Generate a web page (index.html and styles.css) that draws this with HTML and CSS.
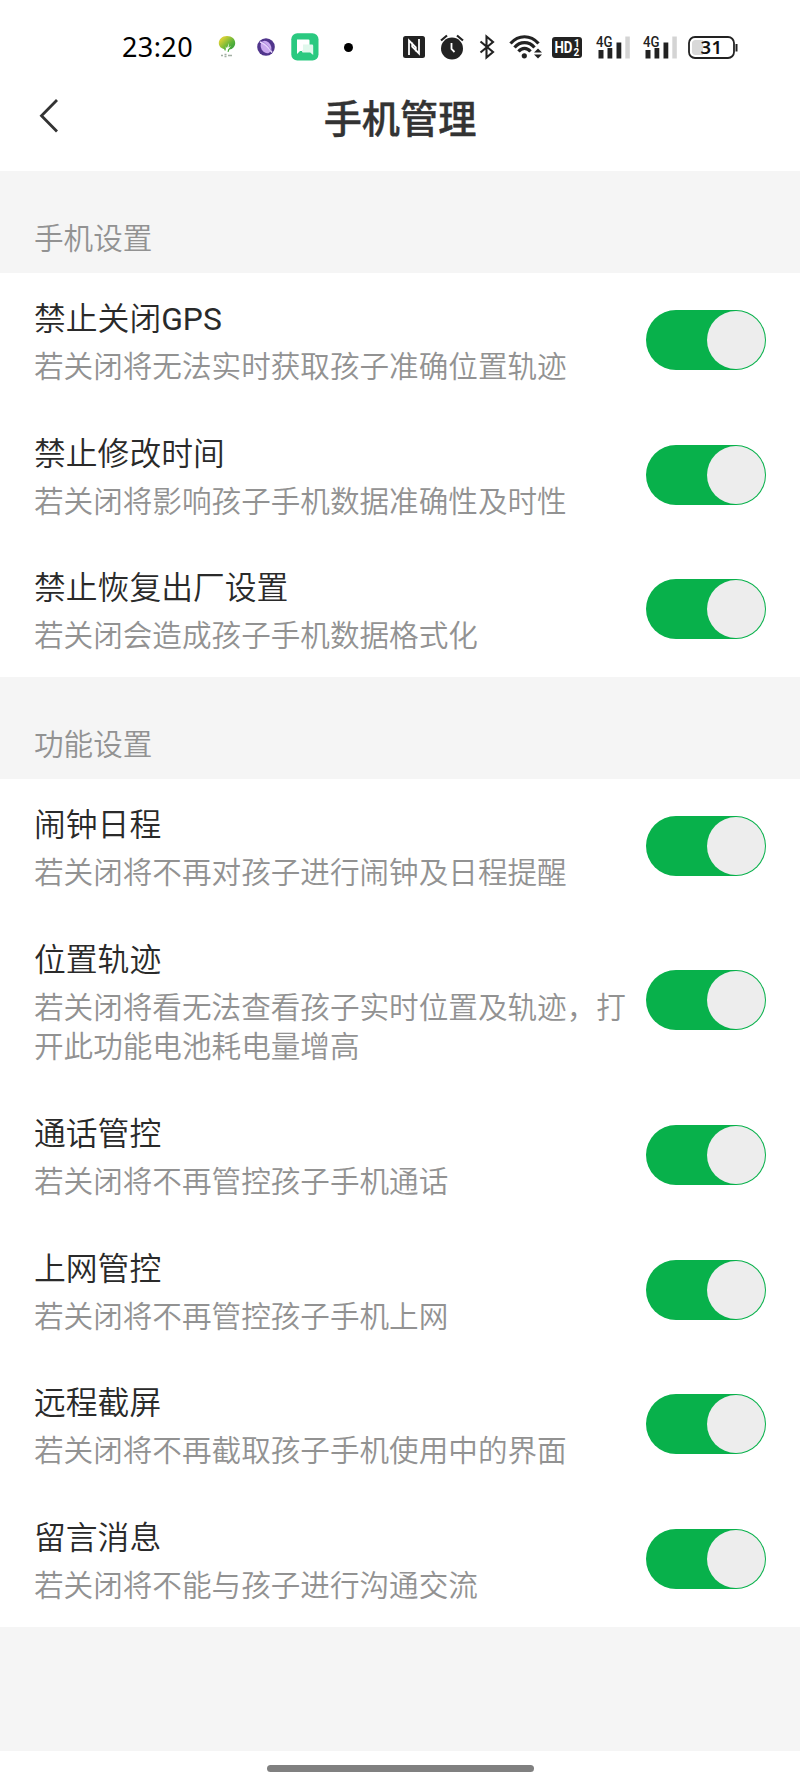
FILE: index.html
```html
<!DOCTYPE html>
<html lang="zh-CN">
<head>
<meta charset="UTF-8">
<meta name="viewport" content="width=device-width, initial-scale=1.0">
<title>手机管理</title>
<link rel="stylesheet" href="styles.css">
</head>
<body>

<!-- 状态栏 -->
<div class="status-bar">
    <span class="clock">23:20</span>
    <svg class="icon-tree" width="18" height="26" viewBox="0 0 18 26">
        <defs>
            <linearGradient id="leaf" x1="0" y1="0" x2="1" y2="1">
                <stop offset="0.2" stop-color="#d3cf35"/>
                <stop offset="0.6" stop-color="#5cb43a"/>
                <stop offset="1" stop-color="#23913f"/>
            </linearGradient>
        </defs>
        <path d="M9 2C4 2 .8 5.400 .8 9c0 3.500 2.600 5.500 5.200 6L7.500 18h3l1-2.500c3-.2 5.700-3 5.700-6.500C17.200 5 14 2 9 2z" fill="url(#leaf)"/>
        <path d="M6 18.500c2-2 2.300-4 1.500-6l1.500 1.500 2-5-.5 4.500 2.500-1.500-3 3.500-.5 3z" fill="#fff"/>
        <path d="M3 21.500h2M6.500 20.500h2M6.500 22.500h2M10 21.500h4" stroke="#a3b0a4" stroke-width="1.500"/>
    </svg>
    <svg class="icon-planet" width="18" height="18" viewBox="0 0 18 18">
        <circle cx="9" cy="9" r="8.800" fill="#50358c"/>
        <ellipse cx="9" cy="9" rx="5" ry="6.500" fill="#c9a8ef" transform="rotate(-30 9 9)"/>
        <path d="M3 4C7 5 12 10 15 14.500" fill="none" stroke="#e6d5fb" stroke-width="1.500"/>
        <path d="M4.500 3.500c4 1.500 8 5.500 9.500 9" fill="none" stroke="#9a78d3" stroke-width=".7"/>
    </svg>
    <svg class="icon-chat" width="28" height="28" viewBox="0 0 28 28">
        <rect x=".3" y=".3" width="27.200" height="27.200" rx="6" fill="#2ac980"/>
        <path d="M6 6.500h11.500q1 0 1 1V17q0 1-1 1H9l-3 3z" fill="#fff"/>
        <path d="M12 11.500h9q1.200 0 1.200 1.200V22l-3-2.500H12q-1 0-1-1V17h1z" fill="#e0f8ec"/>
    </svg>
    <span class="dot"></span>

    <svg class="icon-nfc" width="22" height="22" viewBox="0 0 22 22">
        <rect width="22" height="22" rx="2.500" fill="#222"/>
        <path d="M6 19V4.500l6.800 6.800v4.200M16 3v14.500L9.200 10.700V6.500" fill="none" stroke="#fff" stroke-width="1.800"/>
    </svg>
    <svg class="icon-alarm" width="24" height="26" viewBox="0 0 24 26">
        <circle cx="12" cy="14.500" r="11" fill="#222"/>
        <path d="M1 6.500L7 1.500M17 1.500l6 5" fill="none" stroke="#222" stroke-width="2.200"/>
        <path d="M11.500 9v6l3 3" fill="none" stroke="#fff" stroke-width="1.800"/>
    </svg>
    <svg class="icon-bluetooth" width="16" height="26" viewBox="0 0 16 26">
        <path d="M1.500 7.500L14 18l-6.500 5.500V2.500L14 8 1.500 18.500" fill="none" stroke="#222" stroke-width="2.100"/>
    </svg>
    <svg class="icon-wifi" width="34" height="26" viewBox="0 0 34 26">
        <g fill="none" stroke="#222" stroke-width="3.200">
            <path d="M1.500 9.500C9.500 .5 21.500 .5 29.500 9.500"/>
            <path d="M5.500 13.500C11 7 20 7 25.500 13.500"/>
            <path d="M9.500 17.500C13 13.300 18 13.300 21.500 17.500"/>
        </g>
        <circle cx="15.300" cy="21.800" r="2.600" fill="#222"/>
        <path d="M25 18.500l4-4 4 4zM25 20.500h8l-4 4z" fill="#222"/>
    </svg>
    <svg class="icon-hd" width="30" height="21" viewBox="0 0 30 21">
        <rect width="30" height="21" rx="3" fill="#222"/>
        <text class="hd-text" x="2.500" y="16" textLength="18" lengthAdjust="spacingAndGlyphs">HD</text>
        <text class="hd-num" x="21.900" y="9.500">1</text>
        <text class="hd-num" x="21.600" y="19">2</text>
    </svg>
    <svg class="icon-signal" width="35" height="25" viewBox="0 0 35 25">
        <text class="signal-text" x="0" y="11.500" textLength="16.500" lengthAdjust="spacingAndGlyphs">4G</text>
        <path d="M2.500 15h5v8.500h-5zM11.500 13h4.800v10.500h-4.800zM20.500 7.500h4.800v16h-4.800z" fill="#222"/>
        <path d="M29.300 1.500h4.500v22h-4.500z" fill="#d4d4d4"/>
    </svg>
    <svg class="icon-signal second" width="35" height="25" viewBox="0 0 35 25">
        <text class="signal-text" x="0" y="11.500" textLength="16.500" lengthAdjust="spacingAndGlyphs">4G</text>
        <path d="M2.500 15h5v8.500h-5zM11.500 13h4.800v10.500h-4.800zM20.500 7.500h4.800v16h-4.800z" fill="#222"/>
        <path d="M29.300 1.500h4.500v22h-4.500z" fill="#d4d4d4"/>
    </svg>
    <svg class="icon-battery" width="50" height="23" viewBox="0 0 50 23">
        <rect x="1" y="1" width="45" height="21" rx="6" fill="#fff" stroke="#222" stroke-width="1.800"/>
        <path d="M15 4v15H7.500Q4 19 4 15.500v-8Q4 4 7.500 4z" fill="#d9d9d9"/>
        <path d="M48.500 8v7.500" stroke="#222" stroke-width="2"/>
        <text class="battery-text" x="12.500" y="17.700" textLength="21.500">31</text>
    </svg>
</div>

<!-- 标题栏 -->
<div class="header">
    <svg class="back-btn" width="20" height="36" viewBox="0 0 20 36">
        <path d="M18 2L2.500 17.800 18 33.500" fill="none" stroke="#333" stroke-width="2.800"/>
    </svg>
    <h1>手机管理</h1>
</div>

<!-- 手机设置 -->
<div class="section-title">手机设置</div>
<div class="list">
    <div class="row">
        <div class="info"><h2>禁止关闭<span class="latin">GPS</span></h2><p>若关闭将无法实时获取孩子准确位置轨迹</p></div>
        <div class="switch"></div>
    </div>
    <div class="row">
        <div class="info"><h2>禁止修改时间</h2><p>若关闭将影响孩子手机数据准确性及时性</p></div>
        <div class="switch"></div>
    </div>
    <div class="row">
        <div class="info"><h2>禁止恢复出厂设置</h2><p>若关闭会造成孩子手机数据格式化</p></div>
        <div class="switch"></div>
    </div>
</div>

<!-- 功能设置 -->
<div class="section-title">功能设置</div>
<div class="list">
    <div class="row">
        <div class="info"><h2>闹钟日程</h2><p>若关闭将不再对孩子进行闹钟及日程提醒</p></div>
        <div class="switch"></div>
    </div>
    <div class="row">
        <div class="info"><h2>位置轨迹</h2><p>若关闭将看无法查看孩子实时位置及轨迹，打开此功能电池耗电量增高</p></div>
        <div class="switch"></div>
    </div>
    <div class="row">
        <div class="info"><h2>通话管控</h2><p>若关闭将不再管控孩子手机通话</p></div>
        <div class="switch"></div>
    </div>
    <div class="row">
        <div class="info"><h2>上网管控</h2><p>若关闭将不再管控孩子手机上网</p></div>
        <div class="switch"></div>
    </div>
    <div class="row">
        <div class="info"><h2>远程截屏</h2><p>若关闭将不再截取孩子手机使用中的界面</p></div>
        <div class="switch"></div>
    </div>
    <div class="row">
        <div class="info"><h2>留言消息</h2><p>若关闭将不能与孩子进行沟通交流</p></div>
        <div class="switch"></div>
    </div>
</div>

<!-- 底部手势条 -->
<div class="nav-bar"><span class="nav-handle"></span></div>

</body>
</html>
```
FILE: styles.css
```css
* {
    box-sizing: border-box;
}
body {
    display: flex;
    flex-direction: column;
    height: 1787px;
    margin: 0;
    font-family: Roboto, "Noto Sans CJK SC", sans-serif;
    background-color: #f5f5f5;
    color: #2a2a2a;
}
h1, h2, p {
    margin: 0;
}
/* 状态栏 */
.status-bar {
    display: flex;
    align-items: center;
    height: 94px;
    padding-left: 122px;
    background-color: #fff;
}
.status-bar svg, .dot {
    flex-shrink: 0;
    overflow: visible;
}
.clock {
    width: 96px;
    font-family: "Noto Sans", sans-serif;
    font-size: 27px;
    line-height: 30px;
    letter-spacing: 0.4px;
    color: #000;
}
.icon-planet {
    margin-left: 21px;
}
.icon-chat {
    margin-left: 16px;
}
.dot {
    width: 9px;
    height: 9px;
    margin-left: 25px;
    border-radius: 50%;
    background-color: #000;
}
.icon-nfc {
    margin-left: 50px;
}
.icon-alarm {
    margin-left: 15px;
}
.icon-bluetooth {
    margin-left: 15px;
}
.icon-wifi {
    margin-left: 14px;
}
.icon-hd {
    margin-left: 9px;
}
.icon-signal {
    margin-left: 14px;
}
.icon-signal.second {
    margin-left: 12px;
}
.icon-battery {
    margin-left: 10px;
}
.hd-text {
    font: bold 17px Roboto, sans-serif;
    fill: #fff;
}
.hd-num {
    font: bold 10px Roboto, sans-serif;
    fill: #fff;
}
.signal-text {
    font: 500 15.5px Roboto, sans-serif;
    fill: #222;
}
.battery-text {
    font: 600 18.5px "Noto Sans", sans-serif;
    fill: #111;
}
/* 标题栏 */
.header {
    display: grid;
    grid-template-columns: 100px 1fr 100px;
    align-items: start;
    height: 77px;
    background-color: #fff;
}
.header h1 {
    padding-top: 1px;
    font-size: 38.2px;
    line-height: 50px;
    font-weight: 500;
    text-align: center;
    color: #333;
    -webkit-text-stroke: 0.4px #333;
}
.back-btn {
    margin: 4px 0 0 39px;
}
/* 分组 */
.section-title {
    height: 102px;
    padding: 46px 34px 0;
    font-size: 29.6px;
    line-height: 44px;
    font-weight: 350;
    color: #929292;
}
.list {
    background-color: #fff;
}
.row {
    display: flex;
    justify-content: space-between;
    align-items: center;
    padding: 19.5px 34px 20.3px;
}
.info {
    width: 600px;
    flex-shrink: 0;
    padding-top: 4.5px;
}
.info h2 {
    margin-bottom: 7px;
    font-size: 31.8px;
    line-height: 44px;
    font-weight: 350;
}
.info .latin {
    font-weight: 400;
}
.info p {
    font-size: 29.6px;
    line-height: 39.4px;
    font-weight: 350;
    color: #929292;
}
/* 开关 */
.switch {
    display: flex;
    justify-content: flex-end;
    width: 120px;
    height: 60px;
    flex-shrink: 0;
    padding: 1px;
    border-radius: 30px;
    background-color: #08b14b;
}
.switch::after {
    content: "";
    width: 58px;
    height: 58px;
    border-radius: 50%;
    background-color: #ededed;
}
/* 底部 */
.nav-bar {
    display: flex;
    justify-content: center;
    height: 36px;
    margin-top: auto;
    padding-top: 14px;
    background-color: #fff;
}
.nav-handle {
    width: 267px;
    height: 7px;
    border-radius: 4px;
    background-color: #808080;
}
```
